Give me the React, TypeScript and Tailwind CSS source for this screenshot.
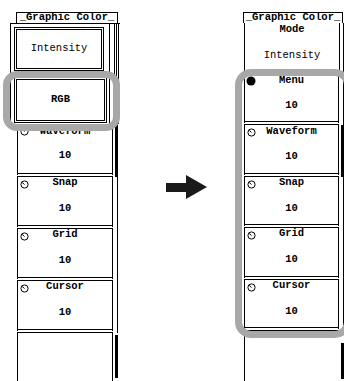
import React from 'react';

const font = "font-['Liberation_Mono',monospace]";

function Knob({ filled }: { filled?: boolean }) {
  if (filled) {
    return (
      <svg width="10" height="10" viewBox="0 0 10 10" className="absolute left-[1px] top-[2px]">
        <circle cx="5" cy="5" r="4.5" fill="#000" />
      </svg>
    );
  }
  return (
    <svg width="9" height="9" viewBox="0 0 9 9" className="absolute left-[2px] top-[3px]">
      <circle cx="4.5" cy="4.5" r="3.6" fill="none" stroke="#000" strokeWidth="1" />
      <path d="M4.5 4.5 L2.2 2.4" stroke="#000" strokeWidth="1" />
    </svg>
  );
}

type ItemProps = {
  label?: string;
  value?: string;
  filled?: boolean;
  thick?: boolean;
  h: string;
  last?: boolean;
  labelTop?: string;
};

function Item({ label, value, filled, thick, h, last, labelTop = 'top-0' }: ItemProps) {
  return (
    <div className={`flex ${h}`}>
      <div
        className={`relative w-[96px] border-x border-black ${last ? '' : 'border-b-[4px] border-double'}`}
      >
        {label && (
          <>
            <Knob filled={filled} />
            <div className={`absolute inset-x-0 ${labelTop} text-center text-[10.5px] leading-[11px] font-bold`}>
              {label}
            </div>
          </>
        )}
        {value && (
          <div className="absolute inset-x-0 top-[26px] text-center text-[10.5px] leading-[11px] font-bold">
            {value}
          </div>
        )}
      </div>
      <div className="flex w-[5px] justify-end">
        <div className={thick ? 'w-[3px] bg-black' : 'w-px bg-black'} />
      </div>
    </div>
  );
}

function Title({ ml, w }: { ml: string; w: string }) {
  return (
    <div
      className={`${ml} ${w} h-[11px] border-x border-t border-black text-center text-[10.5px] leading-[9px] font-bold whitespace-pre`}
    >
      _Graphic Color_
    </div>
  );
}

export default function App() {
  return (
    <div className={`relative flex h-[381px] w-[344px] overflow-hidden bg-white text-black ${font}`}>
      {/* left panel */}
      <div className="ml-[10px] flex w-[110px] flex-col pt-[12px]">
        <Title ml="ml-[6px]" w="w-[102px]" />
        <div className="flex h-[102px] border-l border-t border-black">
          <div className="flex w-[98px] flex-col pl-[3px] pt-[3px]">
            <div className="flex h-[44px] w-[90px] items-center justify-center border-[3px] border-double border-black text-[10.5px] leading-[11px]">
              Intensity
            </div>
            <div className="mt-[6px] flex h-[46px] w-[93px] items-center justify-center border-[3px] border-double border-black text-[10.5px] font-bold leading-[11px]">
              RGB
            </div>
          </div>
          <div className="flex flex-1 justify-between pr-[1px]">
            <div className="w-px bg-black" />
            <div className="ml-[3px] w-px bg-black" />
            <div className="w-px bg-black" />
            <div className="w-px bg-black" />
          </div>
        </div>
        <div className="ml-[7px] flex flex-col">
          <Item label="Waveform" value="10" thick h="h-[53px]" labelTop="top-[2px]" />
          <Item label="Snap" value="10" h="h-[52px]" />
          <Item label="Grid" value="10" h="h-[52px]" />
          <Item label="Cursor" value="10" h="h-[52px]" />
          <div className="flex h-[48px]">
            <div className="w-[96px] border-x border-black" />
            <div className="flex w-[5px] justify-end pb-[3px] pt-[2px]">
              <div className="w-[3px] bg-black" />
            </div>
          </div>
        </div>
      </div>

      {/* arrow */}
      <div className="flex w-[114px] items-start">
        <svg width="42" height="26" viewBox="0 0 42 26" className="ml-[46px] mt-[175px]">
          <polygon points="0,8 20,8 20,0 41,12 20,24 20,17 0,17" fill="#1a1a1a" />
        </svg>
      </div>

      {/* right panel */}
      <div className="flex w-[110px] flex-col pt-[12px]">
        <Title ml="ml-[9px]" w="w-[100px]" />
        <div className="ml-[10px] flex flex-col">
          <div className="flex h-[51px]">
            <div className="relative w-[95px] border-l border-black">
              <div className="absolute inset-x-0 top-[1px] text-center text-[10.5px] font-bold leading-[10px]">Mode</div>
              <div className="absolute inset-x-0 top-[27px] text-center text-[10.5px] leading-[11px]">Intensity</div>
            </div>
            <div className="flex w-[5px] justify-between">
              <div className="w-px bg-black" />
              <div className="w-px bg-black" />
            </div>
          </div>
          <Item label="Menu" value="10" filled h="h-[51px]" labelTop="top-[1px]" />
          <Item label="Waveform" value="10" thick h="h-[52px]" labelTop="top-[1px]" />
          <Item label="Snap" value="10" h="h-[51px]" />
          <Item label="Grid" value="10" h="h-[52px]" />
          <Item label="Cursor" value="10" h="h-[51px]" />
          <div className="flex h-[50px]">
            <div className="w-[96px] border-l border-black" />
            <div className="flex w-[5px] justify-end pb-[2px] pt-[12px]">
              <div className="w-[3px] bg-black" />
            </div>
          </div>
        </div>
      </div>

      {/* highlight frames */}
      <div className="absolute left-[3px] top-[71px] h-[60px] w-[117px] rounded-[14px] border-[7px] border-[#a8a8a8]" />
      <div className="absolute left-[235px] top-[69px] h-[269px] w-[116px] rounded-[16px] border-[7px] border-[#a8a8a8]" />
    </div>
  );
}
